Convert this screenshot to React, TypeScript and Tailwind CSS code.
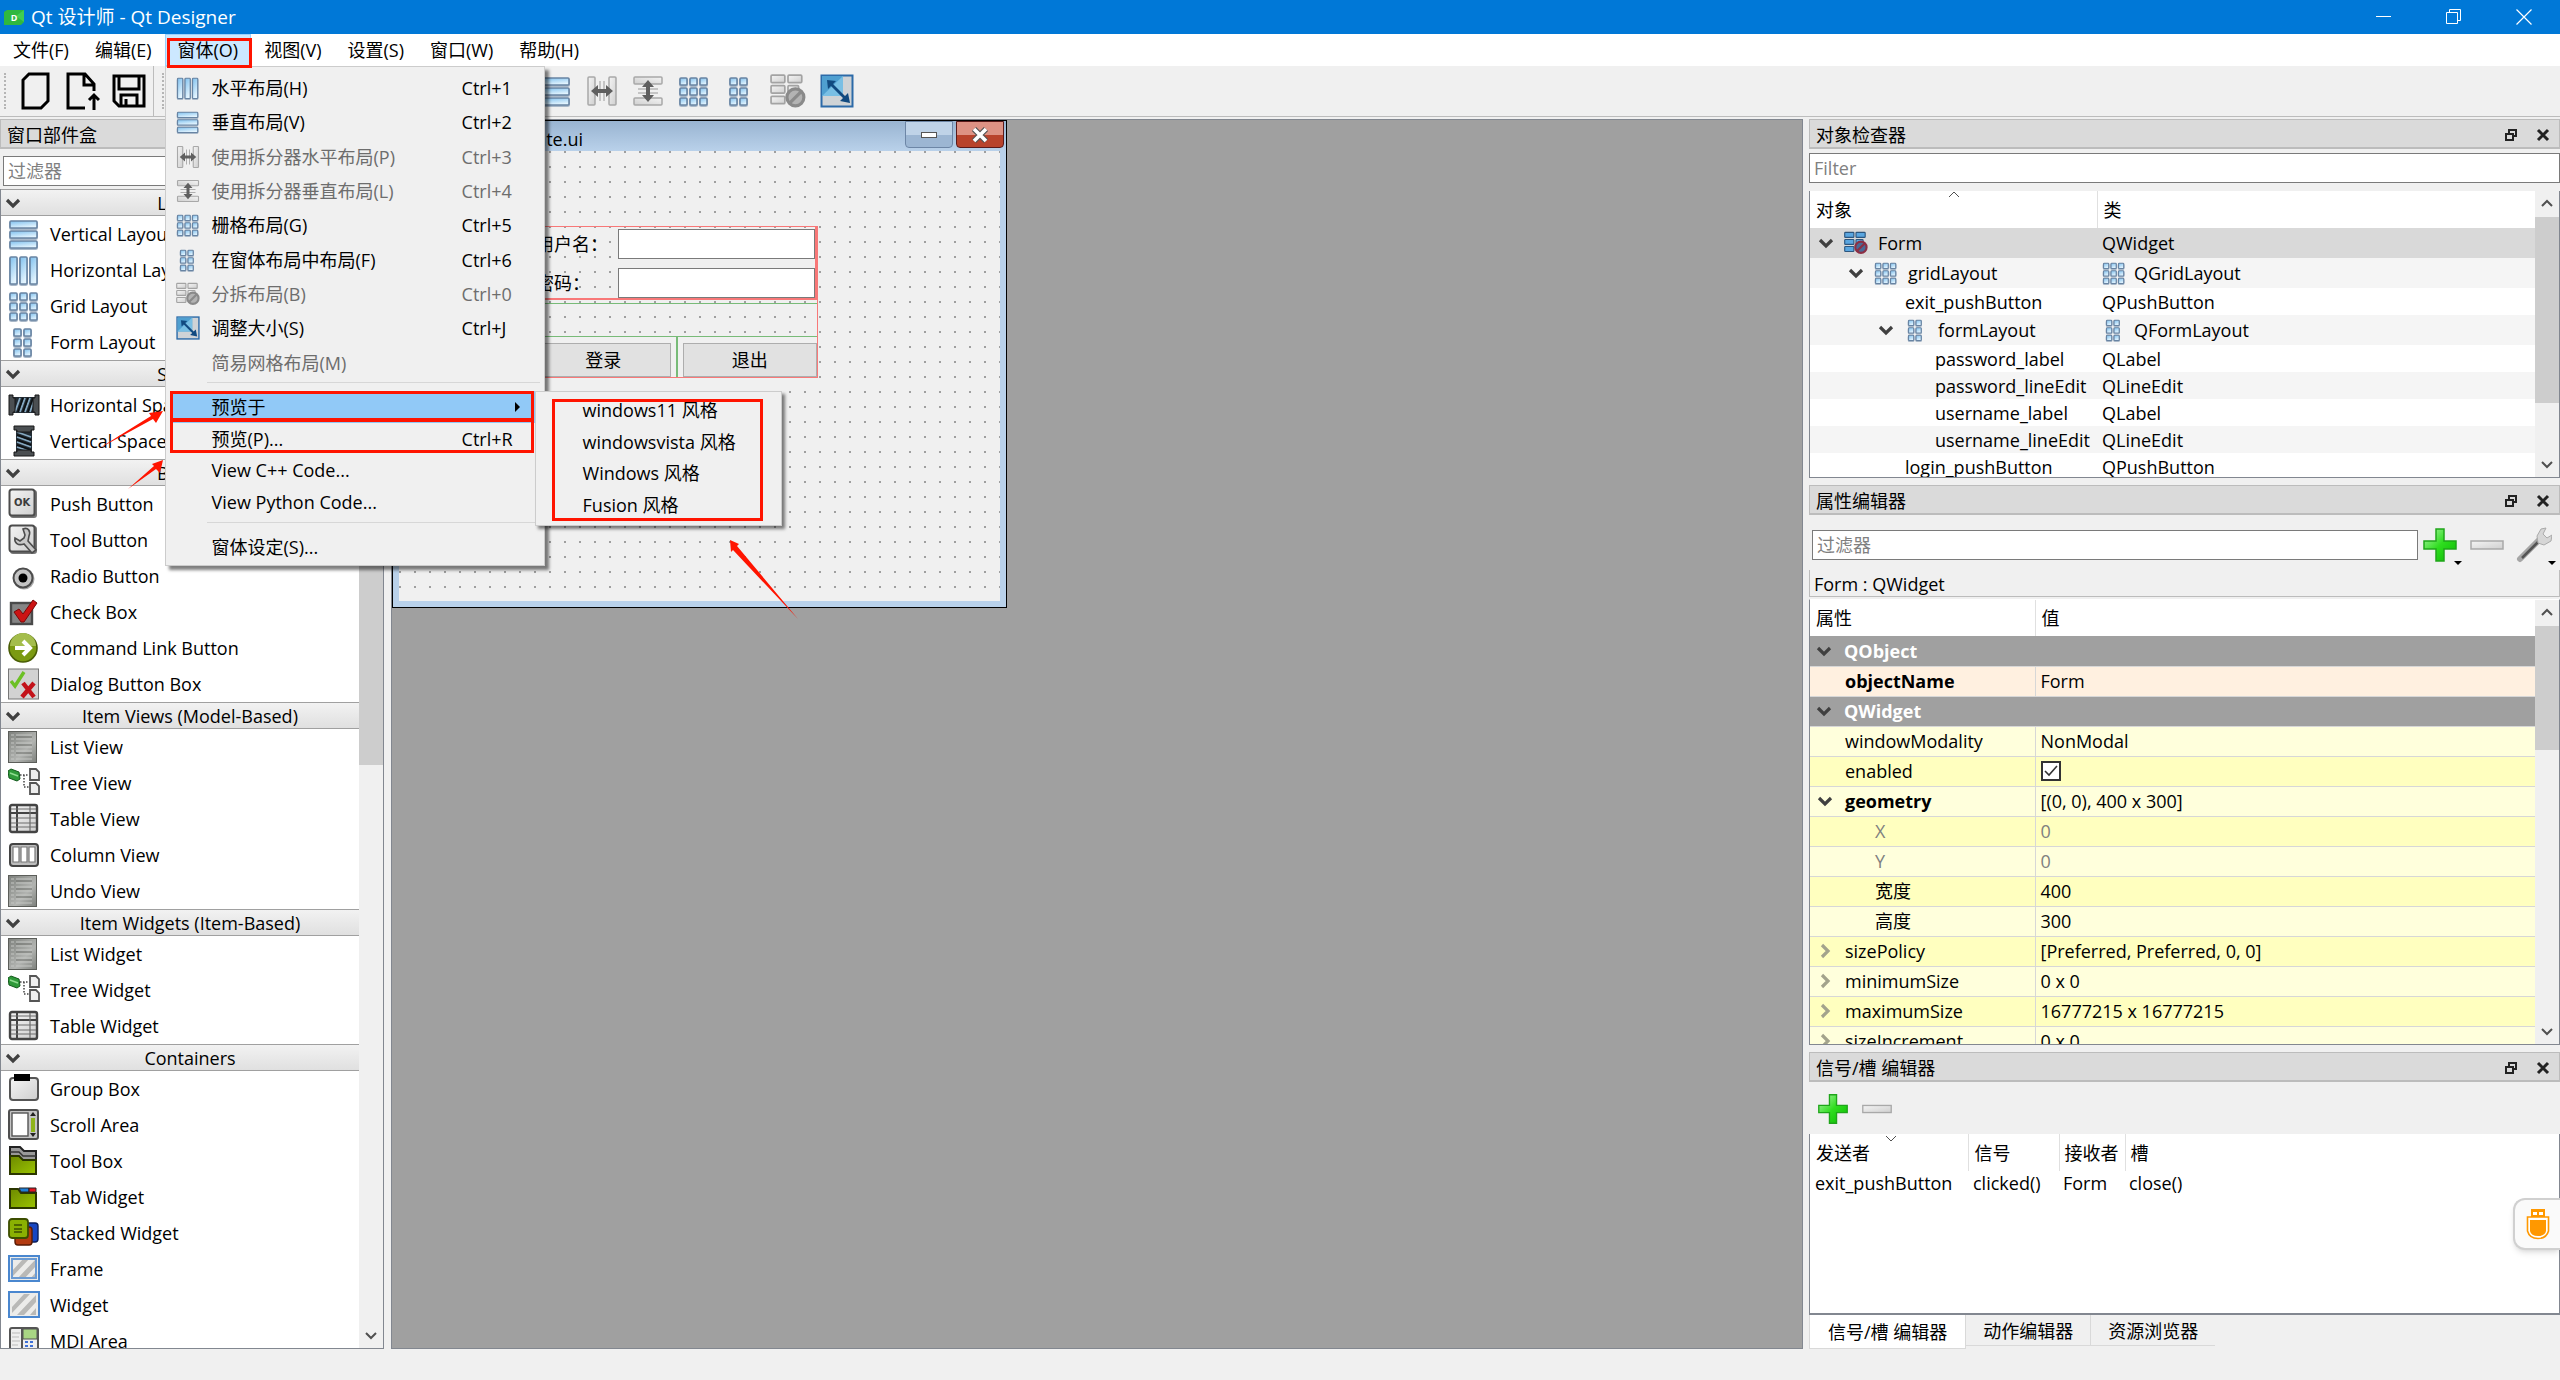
import { ReactNode } from "react";

interface IconProps {
    className?: string;
}

type LayoutKind = "vertical" | "horizontal" | "grid" | "form";

// x, y, width, height on a 32 x 32 grid
const layoutCells: Record<LayoutKind, number[][]> = {
    vertical: [[2, 3, 27, 7], [2, 13, 27, 7], [2, 23, 27, 7]],
    horizontal: [[2, 3, 7, 27], [12, 3, 7, 27], [22, 3, 7, 27]],
    grid: [2, 12, 22].flatMap(y => [2, 12, 22].map(x => [x, y + 1, 7, 7])),
    form: [2, 12, 22].flatMap(y => [6, 16].map(x => [x, y + 1, 7, 7])),
};

function Gradients() {
    return (
        <svg width="0" height="0" className="absolute" aria-hidden="true">
            <defs>
                <linearGradient id="blueCell" x1="0" y1="0" x2="0.4" y2="1">
                    <stop offset="0" stopColor="#7fc0ee" />
                    <stop offset="1" stopColor="#e3f4fe" />
                </linearGradient>
                <linearGradient id="greyCell" x1="0" y1="0" x2="1" y2="1">
                    <stop offset="0" stopColor="#f4f4f4" />
                    <stop offset="1" stopColor="#cfcfcf" />
                </linearGradient>
                <linearGradient id="darkGrey" x1="0" y1="0" x2="1" y2="1">
                    <stop offset="0" stopColor="#7d807c" />
                    <stop offset="0.6" stopColor="#b2b4b1" />
                    <stop offset="1" stopColor="#7d807c" />
                </linearGradient>
                <linearGradient id="green" x1="0" y1="0" x2="1" y2="1">
                    <stop offset="0" stopColor="#b5f5b0" />
                    <stop offset="0.5" stopColor="#2fdd1f" />
                    <stop offset="1" stopColor="#08b800" />
                </linearGradient>
                <linearGradient id="olive" x1="0" y1="0" x2="1" y2="1">
                    <stop offset="0" stopColor="#6d8a00" />
                    <stop offset="1" stopColor="#9bc400" />
                </linearGradient>
            </defs>
        </svg>
    );
}

function LayoutIcon({ kind, className = "size-8" }: IconProps & { kind: LayoutKind }) {
    return (
        <svg viewBox="0 0 32 32" className={className} aria-hidden="true">
            {layoutCells[kind].map(([x, y, w, h]) => (
                <g key={`${x}-${y}`}>
                    <rect x={x} y={y + 1} width={w} height={h} rx="1.5" fill="none" stroke="#a9b8c8" strokeWidth="2" />
                    <rect x={x} y={y} width={w} height={h} rx="1" fill="url(#blueCell)" stroke="#6884a3" strokeWidth="1.6" />
                </g>
            ))}
        </svg>
    );
}

function SplitIcon({ vertical = false, className = "size-8" }: IconProps & { vertical?: boolean }) {
    return (
        <svg viewBox="0 0 32 32" className={className} aria-hidden="true">
            <g transform={vertical ? "rotate(90 16 16)" : undefined}>
                <rect x="2" y="2" width="7" height="28" rx="1" fill="url(#greyCell)" stroke="#a8a8a8" strokeWidth="1.5" />
                <rect x="23" y="2" width="7" height="28" rx="1" fill="url(#greyCell)" stroke="#a8a8a8" strokeWidth="1.5" />
                <path d="M14 6v20M18 6v20" stroke="#9a9a9a" strokeWidth="1" />
                <path d="M5 16l7-6v4h8v-4l7 6-7 6v-4h-8v4z" fill="#5f5f5f" />
            </g>
        </svg>
    );
}

function BreakIcon({ blue = false, className = "size-8" }: IconProps & { blue?: boolean }) {
    const cells = [[1, 2, 13, 7], [17, 2, 13, 7], [1, 12, 13, 7], [17, 12, 10, 7], [1, 22, 13, 7]];
    return (
        <svg viewBox="0 0 34 34" className={className} aria-hidden="true">
            {cells.map(([x, y, w, h]) => (
                <rect key={`${x}-${y}`} x={x} y={y} width={w} height={h} rx="1"
                    fill={blue ? "#5aa6e0" : "url(#greyCell)"} stroke={blue ? "#2d567e" : "#a3a3a3"} strokeWidth="1.6" />
            ))}
            <circle cx="24" cy="23" r="8" fill={blue ? "#4a6a96" : "#b3b3b3"} stroke={blue ? "#8c2f45" : "#8a8a8a"} strokeWidth="3" />
            <path d="M18.500 28.500l11-11" stroke={blue ? "#8c2f45" : "#8a8a8a"} strokeWidth="3" />
        </svg>
    );
}

function AdjustIcon({ className = "size-8" }: IconProps) {
    return (
        <svg viewBox="0 0 34 34" className={className} aria-hidden="true">
            <rect x="1.5" y="1.5" width="31" height="31" fill="#cfd3d6" stroke="#2c6aa8" strokeWidth="2" />
            <path d="M2 2h21v20H2z" fill="#4f9fd0" />
            <path d="M2 22L23 2v20z" fill="#79bfe4" />
            <path d="M7 6l9 1-3 3 12 12 3-3 2 10-10-2 3-3L11 12l-3 3z" fill="#114a80" />
        </svg>
    );
}

function SpacerIcon({ vertical = false }: { vertical?: boolean }) {
    return (
        <svg viewBox="0 0 32 32" className="size-8" aria-hidden="true">
            <g transform={vertical ? "rotate(90 16 16)" : undefined}>
                <path d="M4 8h24v16H4z" fill="#222b33" />
                <path d="M7 23l5-14M12 23l5-14M17 23l5-14M22 23l4-12" stroke="#86a9c2" strokeWidth="1.8" />
                <path d="M10 23l5-14M15 23l5-14M20 23l5-14" stroke="#0c1013" strokeWidth="1.5" />
                <path d="M1 6h4v3h2v14H5v3H1zM31 6h-4v3h-2v14h2v3h4z" fill="#4b4f52" stroke="#191919" />
            </g>
        </svg>
    );
}

function ButtonFrame({ children }: { children: ReactNode }) {
    return (
        <svg viewBox="0 0 32 32" className="size-8" aria-hidden="true">
            <rect x="2" y="2" width="27" height="28" rx="3" fill="#777" />
            <rect x="1.5" y="1.5" width="25" height="26" rx="2.5" fill="url(#greyCell)" stroke="#4c4c4c" strokeWidth="2" />
            {children}
        </svg>
    );
}

function ListIcon() {
    return (
        <svg viewBox="0 0 32 32" className="size-8" aria-hidden="true">
            <rect x="0.5" y="0.5" width="28" height="31" fill="url(#darkGrey)" stroke="#5c5e5a" />
            <path d="M3 4h3M3 8h3M3 12h3M3 16h3M3 20h3M3 24h3M3 28h3M8 4h16M8 8h16M8 12h16M8 16h16M8 20h16M8 24h16M8 28h16" stroke="#c4c6c3" strokeWidth="1" />
            <path d="M8 6h16M8 14h16M8 22h16" stroke="#70726f" />
        </svg>
    );
}

function TreeIcon() {
    return (
        <svg viewBox="0 0 32 32" className="size-8" aria-hidden="true">
            <path d="M12 8h9M16 8v12h6" fill="none" stroke="#444" strokeWidth="1.5" strokeDasharray="1.5 1.5" />
            <path d="M0 4l3-2 8 3 1 7-3 2-8-3z" fill="#2f9a3a" stroke="#135a1c" />
            <path d="M2 6l8 3" stroke="#8fdc90" strokeWidth="1.5" />
            <path d="M22 2h6l3 3v8h-9zM22 16h6l3 3v8h-9z" fill="#eee" stroke="#555" strokeWidth="1.8" />
        </svg>
    );
}

function TableIcon() {
    return (
        <svg viewBox="0 0 32 32" className="size-8" aria-hidden="true">
            <rect x="2" y="2" width="27" height="27" rx="2" fill="url(#greyCell)" stroke="#444" strokeWidth="2.4" />
            <path d="M3 10h25M9 3v25" stroke="#444" strokeWidth="2" />
            <path d="M3 15h25M3 20h25M3 24h25M22 3v25M3 6h25" stroke="#6c6c6c" strokeWidth="1.2" />
        </svg>
    );
}

function ColumnIcon() {
    return (
        <svg viewBox="0 0 32 32" className="size-8" aria-hidden="true">
            <rect x="2" y="5" width="28" height="22" rx="3" fill="#bdbdbd" stroke="#444" strokeWidth="2" />
            <path d="M5 8h6v15H5zM13 8h6v15h-6zM21 8h6v15h-6z" fill="#fff" stroke="#777" strokeWidth="1.2" />
        </svg>
    );
}

function HatchIcon({ framed = false }: { framed?: boolean }) {
    return (
        <svg viewBox="0 0 32 32" className="size-8" aria-hidden="true">
            <rect x="1" y="3" width="30" height="25" fill="#ececea" stroke="#4a87cf" strokeWidth="2" />
            <path d="M4 18L16 5h6L4 24zM9 26L28 6v7L16 26zM22 26l6-7v7z" fill="#b9b9b7" />
            {framed && <rect x="4" y="6" width="24" height="19" fill="none" stroke="#6b9bd3" strokeWidth="2" />}
        </svg>
    );
}

const widgetIcons: Record<string, ReactNode> = {
    vbox: <LayoutIcon kind="vertical" />,
    hbox: <LayoutIcon kind="horizontal" />,
    grid: <LayoutIcon kind="grid" />,
    form: <LayoutIcon kind="form" />,
    hspacer: <SpacerIcon />,
    vspacer: <SpacerIcon vertical />,
    push: (
        <ButtonFrame>
            <text x="14" y="18" textAnchor="middle" fontSize="10" fontWeight="bold" fill="#3c3c3c" fontFamily="DejaVu Sans">OK</text>
        </ButtonFrame>
    ),
    tool: (
        <ButtonFrame>
            <path d="M15 5c5-2 8 2 6 7l-1 5 8 9-4 3-8-9c-6 2-10-1-9-6l5 3 4-3 1-3z" fill="#c9c9c9" stroke="#4d4d4d" strokeWidth="1.6" />
        </ButtonFrame>
    ),
    radio: (
        <svg viewBox="0 0 32 32" className="size-8" aria-hidden="true">
            <circle cx="16" cy="19" r="10.5" fill="#aaa" />
            <circle cx="15" cy="18" r="9.5" fill="#c4c4c4" stroke="#4c4c4c" strokeWidth="2" />
            <circle cx="15" cy="18" r="4.5" fill="#000" />
        </svg>
    ),
    check: (
        <svg viewBox="0 0 32 32" className="size-8" aria-hidden="true">
            <rect x="3" y="7" width="21" height="21" fill="#858585" stroke="#4a4a4a" strokeWidth="2.4" />
            <path d="M6 16l5-3 4 5L25 4l4 3-13 19h-3z" fill="#cc1414" stroke="#7c0808" />
        </svg>
    ),
    command: (
        <svg viewBox="0 0 32 32" className="size-8" aria-hidden="true">
            <circle cx="15" cy="16" r="14" fill="#7b9a12" stroke="#4a5e06" strokeWidth="1.6" />
            <path d="M2 14a13 13 0 0 1 26 0z" fill="#a4bd4c" />
            <path d="M7 16h14M15 9l7 7-7 7" fill="none" stroke="#fff" strokeWidth="4" />
        </svg>
    ),
    dialog: (
        <svg viewBox="0 0 32 32" className="size-8" aria-hidden="true">
            <rect x="0.5" y="1" width="30" height="30" fill="#d2d2d2" stroke="#777" />
            <path d="M3 13l4 5L16 4" fill="none" stroke="#6cc024" strokeWidth="3.4" />
            <path d="M15 15l11 14M26 15L14 29" stroke="#c3121a" strokeWidth="4.4" />
        </svg>
    ),
    list: <ListIcon />,
    tree: <TreeIcon />,
    table: <TableIcon />,
    column: <ColumnIcon />,
    group: (
        <svg viewBox="0 0 32 32" className="size-8" aria-hidden="true">
            <rect x="2" y="5" width="28" height="22" rx="3" fill="url(#greyCell)" stroke="#555" strokeWidth="2" />
            <rect x="6" y="1" width="16" height="7" fill="#000" />
        </svg>
    ),
    scroll: (
        <svg viewBox="0 0 32 32" className="size-8" aria-hidden="true">
            <rect x="1" y="1" width="29" height="29" rx="2" fill="#c4c4c4" stroke="#4f4f4f" strokeWidth="2" />
            <rect x="4" y="4" width="16" height="23" fill="#fff" stroke="#555" strokeWidth="1.4" />
            <rect x="23" y="9" width="4" height="14" fill="#8fb41a" />
            <path d="M22 7l3-4 3 4zM22 24l3 4 3-4z" fill="#222" />
        </svg>
    ),
    toolbox: (
        <svg viewBox="0 0 32 32" className="size-8" aria-hidden="true">
            <path d="M2 29V2h10l4 4h12v23z" fill="#999" stroke="#222" strokeWidth="2" />
            <path d="M2 7h9l4 4h13" fill="none" stroke="#333" strokeWidth="1.4" />
            <path d="M2 11h9l4 4h13v14H2z" fill="url(#olive)" stroke="#2b3600" strokeWidth="2" />
        </svg>
    ),
    tab: (
        <svg viewBox="0 0 32 32" className="size-8" aria-hidden="true">
            <path d="M2 8h8l3 4h15v15H2z" fill="url(#olive)" stroke="#2b3600" strokeWidth="2" />
            <path d="M11 7h10v4H13z" fill="#1f7fd6" stroke="#222" />
            <path d="M21 7h7v4h-7z" fill="#e3151f" stroke="#222" />
        </svg>
    ),
    stacked: (
        <svg viewBox="0 0 32 32" className="size-8" aria-hidden="true">
            <rect x="13" y="6" width="17" height="19" rx="3" fill="#1746c2" stroke="#0a1f5c" strokeWidth="1.4" />
            <rect x="7" y="10" width="17" height="18" rx="3" fill="#b33a10" stroke="#5a1b04" strokeWidth="1.4" />
            <rect x="1" y="2" width="19" height="19" rx="3" fill="#8ab002" stroke="#3c4d00" strokeWidth="1.8" />
            <path d="M6 8h8M6 12h8M6 15h8" stroke="#3c4d00" strokeWidth="1.4" />
        </svg>
    ),
    frame: <HatchIcon framed />,
    widget: <HatchIcon />,
    mdi: (
        <svg viewBox="0 0 32 32" className="size-8" aria-hidden="true">
            <rect x="2" y="3" width="28" height="28" rx="2" fill="#eee" stroke="#555" strokeWidth="2" />
            <path d="M15 4h14v10H15z" fill="#a9d684" stroke="#555" />
            <path d="M4 8h8M4 12h7M4 16h8M4 20h6" stroke="#bbb" />
            <path d="M17 17h3M22 17h3M17 21h3M22 21h3" stroke="#3d70d8" strokeWidth="2" />
            <path d="M14 4v26" stroke="#555" strokeWidth="2" />
        </svg>
    ),
};

function Chevron({ dir = "down", className = "size-4 text-[#404040]" }: IconProps & { dir?: "down" | "right" }) {
    return (
        <svg viewBox="0 0 16 16" className={className} aria-hidden="true">
            <path d={dir === "down" ? "M2 5l6 6 6-6" : "M5 2l6 6-6 6"} fill="none" stroke="currentColor" strokeWidth="3.2" />
        </svg>
    );
}

function ThinChevron({ dir, bold = false }: { dir: "down" | "up"; bold?: boolean }) {
    return (
        <svg viewBox="0 0 16 16" className="size-4" aria-hidden="true">
            <path d={dir === "down" ? "M3 6l5 5 5-5" : "M3 10l5-5 5 5"} fill="none" stroke="#505050" strokeWidth={bold ? 2 : 1} />
        </svg>
    );
}

function PlusIcon({ className = "size-9" }: IconProps) {
    return (
        <svg viewBox="0 0 36 36" className={className} aria-hidden="true">
            <path d="M14 2h8v12h12v8H22v12h-8V22H2v-8h12z" fill="url(#green)" stroke="#1fa51a" strokeWidth="1.5" />
        </svg>
    );
}

function MinusIcon({ className = "size-9" }: IconProps) {
    return (
        <svg viewBox="0 0 36 36" className={className} aria-hidden="true">
            <rect x="2" y="14" width="32" height="8" fill="url(#greyCell)" stroke="#a9a9a9" strokeWidth="1.5" />
        </svg>
    );
}

const widgetGroups = [
    { title: "Layouts", items: [["vbox", "Vertical Layout"], ["hbox", "Horizontal Layout"], ["grid", "Grid Layout"], ["form", "Form Layout"]] },
    { title: "Spacers", items: [["hspacer", "Horizontal Spacer"], ["vspacer", "Vertical Spacer"]] },
    {
        title: "Buttons",
        items: [["push", "Push Button"], ["tool", "Tool Button"], ["radio", "Radio Button"], ["check", "Check Box"], ["command", "Command Link Button"], ["dialog", "Dialog Button Box"]],
    },
    { title: "Item Views (Model-Based)", items: [["list", "List View"], ["tree", "Tree View"], ["table", "Table View"], ["column", "Column View"], ["list", "Undo View"]] },
    { title: "Item Widgets (Item-Based)", items: [["list", "List Widget"], ["tree", "Tree Widget"], ["table", "Table Widget"]] },
    {
        title: "Containers",
        items: [["group", "Group Box"], ["scroll", "Scroll Area"], ["toolbox", "Tool Box"], ["tab", "Tab Widget"], ["stacked", "Stacked Widget"], ["frame", "Frame"], ["widget", "Widget"], ["mdi", "MDI Area"]],
    },
];

const layoutActions = [
    { label: "水平布局(H)", keys: "Ctrl+1", icon: <LayoutIcon kind="horizontal" className="size-6" /> },
    { label: "垂直布局(V)", keys: "Ctrl+2", icon: <LayoutIcon kind="vertical" className="size-6" /> },
    { label: "使用拆分器水平布局(P)", keys: "Ctrl+3", icon: <SplitIcon className="size-6" />, disabled: true },
    { label: "使用拆分器垂直布局(L)", keys: "Ctrl+4", icon: <SplitIcon vertical className="size-6" />, disabled: true },
    { label: "栅格布局(G)", keys: "Ctrl+5", icon: <LayoutIcon kind="grid" className="size-6" /> },
    { label: "在窗体布局中布局(F)", keys: "Ctrl+6", icon: <LayoutIcon kind="form" className="size-6" /> },
    { label: "分拆布局(B)", keys: "Ctrl+0", icon: <BreakIcon className="size-6" />, disabled: true },
    { label: "调整大小(S)", keys: "Ctrl+J", icon: <AdjustIcon className="size-6" /> },
    { label: "简易网格布局(M)", keys: "", icon: null, disabled: true },
];

const objects = [
    { name: "Form", type: "QWidget", icon: "break", indent: "pl-1", open: true, row: "h-[30px] bg-[#d9d9d9]" },
    { name: "gridLayout", type: "QGridLayout", icon: "grid", indent: "pl-[34px]", open: true, row: "h-[30px] bg-[#f5f5f5]" },
    { name: "exit_pushButton", type: "QPushButton", icon: "", indent: "pl-[95px]", row: "h-[27px]" },
    { name: "formLayout", type: "QFormLayout", icon: "form", indent: "pl-16", open: true, row: "h-[30px] bg-[#f5f5f5]" },
    { name: "password_label", type: "QLabel", icon: "", indent: "pl-[125px]", row: "h-[27px]" },
    { name: "password_lineEdit", type: "QLineEdit", icon: "", indent: "pl-[125px]", row: "h-[27px] bg-[#f5f5f5]" },
    { name: "username_label", type: "QLabel", icon: "", indent: "pl-[125px]", row: "h-[27px]" },
    { name: "username_lineEdit", type: "QLineEdit", icon: "", indent: "pl-[125px]", row: "h-[27px] bg-[#f5f5f5]" },
    { name: "login_pushButton", type: "QPushButton", icon: "", indent: "pl-[95px]", row: "h-[27px]" },
];

const light = "bg-[#ffffdc]";
const deep = "bg-[#ffffbf]";

const properties = [
    { name: "windowModality", value: "NonModal", bg: light },
    { name: "enabled", value: "check", bg: deep },
    { name: "geometry", value: "[(0, 0), 400 x 300]", bg: light, bold: true, arrow: "down" },
    { name: "X", value: "0", bg: deep, child: true, muted: true },
    { name: "Y", value: "0", bg: light, child: true, muted: true },
    { name: "宽度", value: "400", bg: deep, child: true },
    { name: "高度", value: "300", bg: light, child: true },
    { name: "sizePolicy", value: "[Preferred, Preferred, 0, 0]", bg: deep, arrow: "right" },
    { name: "minimumSize", value: "0 x 0", bg: light, arrow: "right" },
    { name: "maximumSize", value: "16777215 x 16777215", bg: deep, arrow: "right" },
    { name: "sizeIncrement", value: "0 x 0", bg: light, arrow: "right" },
];

function DockTitle({ title, controls = true }: { title: string; controls?: boolean }) {
    return (
        <div className="flex h-[30px] shrink-0 items-center border border-b-2 border-[#bcbcbc] bg-[#dadada] pt-0.5 pl-1.5">
            <h2 className="flex-1">{title}</h2>
            {controls && (
                <div className="flex items-center gap-4 pr-2">
                    <button aria-label="浮动">
                        <svg viewBox="0 0 16 16" className="size-4">
                            <path d="M6 6V3h7v6h-3" fill="none" stroke="#222" strokeWidth="2" />
                            <path d="M3 7h7v6H3z" fill="none" stroke="#222" strokeWidth="2" />
                        </svg>
                    </button>
                    <button aria-label="关闭">
                        <svg viewBox="0 0 16 16" className="size-4">
                            <path d="M3 3l10 10M13 3L3 13" stroke="#222" strokeWidth="3" />
                        </svg>
                    </button>
                </div>
            )}
        </div>
    );
}

function ScrollBar({ thumb }: { thumb: string }) {
    return (
        <div className="flex w-6 shrink-0 flex-col items-center bg-[#f0f0f0]">
            <div className="flex h-[26px] shrink-0 items-center"><ThinChevron dir="up" bold /></div>
            <div className="flex w-full flex-1 flex-col">
                <div className={`w-full bg-[#cdcdcd] ${thumb}`} />
            </div>
            <div className="flex h-[26px] shrink-0 items-center"><ThinChevron dir="down" bold /></div>
        </div>
    );
}

function StyleMenu() {
    return (
        <div className="absolute top-0 left-[365px] z-10 w-[247px] border border-[#ccc] bg-[#f0f0f0] pt-0.5 pb-1 shadow-[3px_3px_3px_rgba(0,0,0,0.5)]">
            <ul className="grid h-[127px] grid-rows-4">
                {["windows11 风格", "windowsvista 风格", "Windows 风格", "Fusion 风格"].map(style => (
                    <li key={style} className="flex">
                        <button className="flex-1 pl-[47px] text-left">{style}</button>
                    </li>
                ))}
            </ul>
            <span className="absolute top-[7px] left-4 h-[122px] w-[211px] border-3 border-[#ff1400]" />
        </div>
    );
}

function FormMenu() {
    return (
        <div className="absolute top-full left-0 z-20 w-[380px] border border-[#ccc] bg-[#f0f0f0] px-1 pt-1 pb-0.5 shadow-[4px_4px_3px_rgba(0,0,0,0.5)]">
            <ul className="grid h-[309px] grid-rows-9">
                {layoutActions.map(action => (
                    <li key={action.label} className="flex">
                        <button disabled={action.disabled} className="flex flex-1 items-center text-left disabled:text-[#6d6d6d]">
                            <span className="flex w-[42px] pl-1.5">{action.icon}</span>
                            <span className="flex-1">{action.label}</span>
                            <span className="w-[78px]">{action.keys}</span>
                        </button>
                    </li>
                ))}
            </ul>
            <hr className="mt-0.5 mb-2 ml-[37px] border-[#d7d7d7]" />
            <ul className="grid h-[127px] grid-rows-4">
                <li className="relative flex">
                    <button className="flex flex-1 items-center bg-[#91c9f7] pr-5 pl-[42px] text-left">
                        <span className="flex-1">预览于</span>
                        <span className="size-0 border-y-[5px] border-l-[5px] border-y-transparent border-l-black" />
                    </button>
                    <StyleMenu />
                    <span className="absolute top-0 left-0 h-[30px] w-[364px] border-3 border-[#ff1400]" />
                </li>
                <li className="relative flex">
                    <button className="flex flex-1 items-center pl-[42px] text-left">
                        <span className="flex-1">预览(P)...</span>
                        <span className="w-[78px]">Ctrl+R</span>
                    </button>
                    <span className="absolute -top-1 left-0 h-[34px] w-[364px] border-3 border-[#ff1400]" />
                </li>
                <li className="flex"><button className="flex-1 pl-[42px] text-left">View C++ Code...</button></li>
                <li className="flex"><button className="flex-1 pl-[42px] text-left">View Python Code...</button></li>
            </ul>
            <hr className="mt-1 mb-2 ml-[37px] border-[#d7d7d7]" />
            <button className="block h-8 w-full pl-[42px] text-left">窗体设定(S)...</button>
        </div>
    );
}

function MenuBar() {
    return (
        <nav className="flex h-8 shrink-0 bg-white">
            <button className="px-[13px]">文件(F)</button>
            <button className="px-[13px]">编辑(E)</button>
            <div className="relative flex">
                <button className="bg-[#cce8ff] px-[13px] inset-ring inset-ring-[#99d1ff]">窗体(O)</button>
                <FormMenu />
                <span className="absolute top-1 left-0.5 z-30 h-[30px] w-[85px] border-3 border-[#ff1400]" />
            </div>
            <button className="px-[13px]">视图(V)</button>
            <button className="px-[13px]">设置(S)</button>
            <button className="px-[13px]">窗口(W)</button>
            <button className="px-[13px]">帮助(H)</button>
        </nav>
    );
}

function Handle() {
    return <span className="h-9 border-l-2 border-dotted border-[#b5b5b5]" />;
}

function ToolBar() {
    return (
        <div className="flex h-[51px] shrink-0 items-center border-b border-[#bcbcbc]">
            <div className="flex h-full items-center gap-[11px] border-r border-[#bcbcbc] pr-1.5 pl-1">
                <Handle />
                <button aria-label="新建">
                    <svg viewBox="0 0 36 40" className="h-10 w-9">
                        <path d="M12 3h19v27l-7 7H6V9z" fill="none" stroke="#000" strokeWidth="3" />
                    </svg>
                </button>
                <button aria-label="打开">
                    <svg viewBox="0 0 36 40" className="h-10 w-9">
                        <path d="M21 37H4V3h17l9 10v7M20 3v11h10" fill="none" stroke="#000" strokeWidth="3" />
                        <path d="M30 39V25M25 29l5-5 5 5" fill="none" stroke="#000" strokeWidth="3" />
                    </svg>
                </button>
                <button aria-label="保存">
                    <svg viewBox="0 0 36 40" className="h-10 w-9">
                        <path d="M3 5h30v30H8l-5-5z" fill="none" stroke="#000" strokeWidth="3" />
                        <path d="M8 5v13h20V5M10 35V24h16v11M15 28v6" fill="none" stroke="#000" strokeWidth="3" />
                    </svg>
                </button>
            </div>
            <div className="flex flex-1 items-center pl-2">
                <Handle />
                <div className="flex items-center gap-[14px] pl-[376px]">
                    <button aria-label="垂直布局"><LayoutIcon kind="vertical" /></button>
                    <button disabled aria-label="使用拆分器水平布局"><SplitIcon /></button>
                    <button disabled aria-label="使用拆分器垂直布局"><SplitIcon vertical /></button>
                    <button aria-label="栅格布局"><LayoutIcon kind="grid" /></button>
                    <button aria-label="在窗体布局中布局"><LayoutIcon kind="form" /></button>
                    <button disabled aria-label="分拆布局"><BreakIcon className="size-9" /></button>
                    <button aria-label="调整大小"><AdjustIcon className="size-[34px]" /></button>
                </div>
            </div>
        </div>
    );
}

function WidgetBox() {
    return (
        <aside className="flex w-[384px] shrink-0 flex-col pt-0.5">
            <DockTitle title="窗口部件盒" />
            <input aria-label="过滤器" placeholder="过滤器" className="mx-[3px] mt-[7px] h-[30px] shrink-0 border border-[#7a7a7a] bg-white px-1 placeholder:text-[#808080]" />
            <div className="mt-[3px] flex min-h-0 flex-1 border border-t-0 border-[#828790] bg-white">
                <div className="min-w-0 flex-1 overflow-hidden">
                    {widgetGroups.map(group => (
                        <section key={group.title}>
                            <h3 className="flex h-[27px] items-center border-y border-[#a0a0a0] bg-linear-to-b from-[#f2f2f2] to-[#e0e0e0] pl-1">
                                <Chevron />
                                <span className="flex-1 text-center">{group.title}</span>
                            </h3>
                            <ul>
                                {group.items.map(([icon, name]) => (
                                    <li key={name} className="flex h-9 items-center gap-2.5 pl-[7px]">
                                        {widgetIcons[icon]}
                                        <span>{name}</span>
                                    </li>
                                ))}
                            </ul>
                        </section>
                    ))}
                </div>
                <ScrollBar thumb="h-[550px]" />
            </div>
        </aside>
    );
}

function FormWindow() {
    return (
        <div className="w-[615px] border border-black bg-[#b9d1ea]">
            <div className="flex h-[30px] items-start justify-between bg-linear-to-b from-[#99b4d1] to-[#b9d1ea]">
                <span className="w-[190px] pt-1.5 text-right">template.ui</span>
                <div className="flex gap-[3px] pr-0.5">
                    <button aria-label="最小化" className="flex h-[27px] w-12 items-center justify-center rounded-b-sm border border-[#6d86a6] bg-linear-to-b from-[#bfd3e8] from-50% to-[#9cb6d3] to-50%">
                        <span className="h-1.5 w-4 border border-[#555] bg-white" />
                    </button>
                    <button aria-label="关闭窗体" className="flex h-[27px] w-12 items-center justify-center rounded-b-sm border border-[#5a1a1a] bg-linear-to-b from-[#dd9284] from-50% to-[#b8432c] to-50%">
                        <svg viewBox="0 0 20 20" className="size-5">
                            <path d="M4 4l12 12M16 4L4 16" stroke="#555" strokeWidth="6" />
                            <path d="M4 4l12 12M16 4L4 16" stroke="#fff" strokeWidth="3.6" />
                        </svg>
                    </button>
                </div>
            </div>
            <div className="mx-1.5 mb-[6px] h-[450px] bg-[#f0f0f0] bg-[conic-gradient(at_2px_2px,transparent_75%,#9f9f9f_0)] bg-size-[15px_15px] pt-[75px] pl-[136px]">
                <div className="flex h-[152px] w-[283px] flex-col border border-[#f87878]">
                    <div className="flex flex-col gap-[9px] border-r-2 border-b-2 border-[#f87878] pt-0.5">
                        <div className="flex h-[30px] items-center">
                            <label htmlFor="username" className="w-[82px]">用户名：</label>
                            <input id="username" className="h-full min-w-0 flex-1 border border-[#7a7a7a] bg-white px-1" />
                        </div>
                        <div className="flex h-[30px] items-center">
                            <label htmlFor="password" className="w-[82px]">密码：</label>
                            <input id="password" className="h-full min-w-0 flex-1 border border-[#7a7a7a] bg-white px-1" />
                        </div>
                    </div>
                    <div className="mt-[3px] h-[34px] border-y border-[#78bb78]" />
                    <div className="flex flex-1 gap-[5px]">
                        <button className="mt-1.5 flex-1 border border-[#adadad] bg-[#e1e1e1]">登录</button>
                        <span className="w-0.5 bg-[#78bb78]" />
                        <button className="mt-1.5 flex-1 border border-[#adadad] bg-[#e1e1e1]">退出</button>
                    </div>
                </div>
            </div>
        </div>
    );
}

function ObjectInspector() {
    return (
        <section className="flex flex-col">
            <DockTitle title="对象检查器" />
            <input aria-label="Filter" placeholder="Filter" className="mt-1 h-[30px] border border-[#7a7a7a] bg-white px-1 placeholder:text-[#808080]" />
            <div className="mt-2 flex h-[287px] overflow-hidden border border-t-0 border-[#828790] bg-white">
                <div className="min-w-0 flex-1 overflow-hidden">
                    <table className="w-full table-fixed border-collapse">
                        <thead>
                            <tr className="h-[37px]">
                                <th className="relative w-[287px] border-r border-[#e0e0e0] p-0 pl-1.5 text-left font-normal">
                                    <span className="absolute -top-1 left-[136px]"><ThinChevron dir="up" /></span>
                                    对象
                                </th>
                                <th className="p-0 pl-1.5 text-left font-normal">类</th>
                            </tr>
                        </thead>
                        <tbody>
                            {objects.map(object => (
                                <tr key={object.name} className={object.row}>
                                    <td className={`p-0 ${object.indent}`}>
                                        <span className="flex items-center whitespace-nowrap">
                                            {object.open && <span className="mr-2.5 ml-1 flex"><Chevron /></span>}
                                            {object.icon === "break" && <BreakIcon blue className="mr-2.5 size-6" />}
                                            {object.icon === "grid" && <LayoutIcon kind="grid" className="mr-2.5 size-6" />}
                                            {object.icon === "form" && <LayoutIcon kind="form" className="mr-2.5 size-6" />}
                                            {object.name}
                                        </span>
                                    </td>
                                    <td className="p-0 pl-[5px]">
                                        <span className="flex items-center gap-2">
                                            {object.icon === "grid" && <LayoutIcon kind="grid" className="size-6" />}
                                            {object.icon === "form" && <LayoutIcon kind="form" className="size-6" />}
                                            {object.type}
                                        </span>
                                    </td>
                                </tr>
                            ))}
                        </tbody>
                    </table>
                </div>
                <ScrollBar thumb="h-[186px]" />
            </div>
        </section>
    );
}

function GroupRow({ name }: { name: string }) {
    return (
        <tr className="h-[30px] border-b border-[#d7d7d7] bg-[#a0a0a0]">
            <th colSpan={2} className="p-0 pl-1.5 text-left font-bold text-white">
                <span className="flex items-center gap-3">
                    <Chevron />
                    {name}
                </span>
            </th>
        </tr>
    );
}

function PropertyEditor() {
    return (
        <section className="mt-[7px] flex min-h-0 flex-1 flex-col">
            <DockTitle title="属性编辑器" />
            <div className="flex h-[55px] shrink-0 items-center gap-[11px] pt-1 pr-2 pl-[3px]">
                <div className="flex flex-1 items-center gap-1">
                    <input aria-label="属性过滤器" placeholder="过滤器" className="h-[30px] min-w-0 flex-1 border border-[#7a7a7a] bg-white px-1 placeholder:text-[#808080]" />
                    <button aria-label="添加" className="relative">
                        <PlusIcon />
                        <span className="absolute -right-1 -bottom-0.5 border-x-4 border-t-4 border-x-transparent border-t-black" />
                    </button>
                </div>
                <button aria-label="删除"><MinusIcon /></button>
                <button aria-label="配置" className="relative">
                    <svg viewBox="0 0 36 36" className="size-9">
                        <path d="M4 32L24 12" stroke="#a6a6a6" strokeWidth="6" strokeLinecap="round" />
                        <path d="M6 31L24 13" stroke="#555" strokeWidth="2.5" />
                        <path d="M21 9l4-7 5-1-3 6 4 4 5-3-1 6-7 4-6-2z" fill="#d6d6d6" stroke="#aaa" />
                    </svg>
                    <span className="absolute -right-1 -bottom-0.5 border-x-4 border-t-4 border-x-transparent border-t-black" />
                </button>
            </div>
            <p className="h-[27px] shrink-0 border-x border-b border-[#bcbcbc] px-1 pt-0.5">Form : QWidget</p>
            <div className="mt-[2px] flex min-h-0 flex-1 overflow-hidden border border-[#828790] border-t-white bg-white">
                <div className="min-w-0 flex-1 overflow-hidden">
                    <table className="w-full table-fixed border-collapse">
                        <thead>
                            <tr className="h-9">
                                <th className="w-[225px] border-r border-[#e0e0e0] p-0 pl-1.5 text-left font-normal">属性</th>
                                <th className="p-0 pl-1.5 text-left font-normal">值</th>
                            </tr>
                        </thead>
                        <tbody>
                            <GroupRow name="QObject" />
                            <tr className="h-[30px] border-b border-[#d7d7d7] bg-[#fff0e0]">
                                <td className="border-r border-[#d7d7d7] p-0 pl-[35px] font-bold">objectName</td>
                                <td className="p-0 pl-[5px]">Form</td>
                            </tr>
                            <GroupRow name="QWidget" />
                            {properties.map(property => (
                                <tr key={property.name} className={`h-[30px] border-b border-[#d7d7d7] ${property.bg} ${property.muted ? "text-[#808080]" : ""}`}>
                                    <td className={`border-r border-[#d7d7d7] p-0 ${property.child ? "pl-[65px]" : property.arrow ? "pl-[7px]" : "pl-[35px]"} ${property.bold ? "font-bold" : ""}`}>
                                        <span className="flex items-center gap-3">
                                            {property.arrow === "down" && <Chevron />}
                                            {property.arrow === "right" && <Chevron dir="right" className="size-4 text-[#a3a38c]" />}
                                            {property.name}
                                        </span>
                                    </td>
                                    <td className="p-0 pl-[5px]">
                                        {property.value === "check" ? (
                                            <label className="relative flex size-5 items-center">
                                                <input type="checkbox" defaultChecked aria-label="enabled" className="size-5 appearance-none border-2 border-[#333] bg-white" />
                                                <svg viewBox="0 0 20 20" className="absolute size-5">
                                                    <path d="M4 10l4 4 8-9" fill="none" stroke="#333" strokeWidth="1.6" />
                                                </svg>
                                            </label>
                                        ) : property.value}
                                    </td>
                                </tr>
                            ))}
                        </tbody>
                    </table>
                </div>
                <ScrollBar thumb="h-[124px]" />
            </div>
        </section>
    );
}

function SignalEditor() {
    return (
        <section className="mt-[7px] flex shrink-0 flex-col">
            <DockTitle title="信号/槽 编辑器" />
            <div className="flex h-[52px] items-center gap-3 pt-0.5 pl-2">
                <button aria-label="添加信号"><PlusIcon className="size-8" /></button>
                <button aria-label="删除信号"><MinusIcon className="size-8" /></button>
            </div>
            <div className="h-[181px] border border-t-0 border-b-2 border-[#828790] bg-white">
                <table className="border-collapse">
                    <thead>
                        <tr className="h-[37px] text-left">
                            <th className="relative w-[158px] border-r border-[#e0e0e0] p-0 pl-1.5 font-normal">
                                <span className="absolute -top-1 left-[73px]"><ThinChevron dir="down" /></span>
                                发送者
                            </th>
                            <th className="w-[91px] border-r border-[#e0e0e0] p-0 pl-1.5 font-normal">信号</th>
                            <th className="w-[66px] border-r border-[#e0e0e0] p-0 pl-[5px] font-normal">接收者</th>
                            <th className="w-20 p-0 pl-[5px] font-normal">槽</th>
                        </tr>
                    </thead>
                    <tbody>
                        <tr className="h-6 whitespace-nowrap">
                            <td className="p-0 pl-[5px]">exit_pushButton</td>
                            <td className="p-0 pl-[5px]">clicked()</td>
                            <td className="p-0 pl-1">Form</td>
                            <td className="p-0 pl-1">close()</td>
                        </tr>
                    </tbody>
                </table>
            </div>
            <div role="tablist" className="flex h-[34px] items-start">
                <button role="tab" aria-selected="true" className="h-full border border-t-0 border-[#d9d9d9] bg-white px-[18px]">信号/槽 编辑器</button>
                <button role="tab" aria-selected="false" className="h-[31px] border-r border-b border-[#d9d9d9] px-[17px] pt-0.5">动作编辑器</button>
                <button role="tab" aria-selected="false" className="h-[31px] border-b border-[#d9d9d9] px-[17px] pt-0.5">资源浏览器</button>
            </div>
        </section>
    );
}

export default function App() {
    return (
        <div className="relative flex h-screen flex-col overflow-hidden bg-[#f0f0f0] font-['Open_Sans','Noto_Sans_CJK_SC',sans-serif] text-[18px] leading-6 text-black">
            <Gradients />
            <header className="flex h-[34px] shrink-0 items-center bg-[#0078d7] pl-1 text-white">
                <svg viewBox="0 0 20 16" className="mr-[7px] h-4 w-5" aria-hidden="true">
                    <path d="M3 1h17v12l-3 3H0V3z" fill="#2fb83f" />
                    <path d="M20 1v12l-8-6z" fill="#41cd52" />
                    <text x="10" y="11.5" textAnchor="middle" fontSize="9" fontWeight="bold" fill="#fff">D</text>
                </svg>
                <h1 className="flex-1 text-[19px]">Qt 设计师 - Qt Designer</h1>
                <div className="flex gap-[54px] pr-7">
                    <button aria-label="最小化窗口">
                        <svg viewBox="0 0 16 16" className="size-4"><path d="M0 7.5h15" stroke="#fff" /></svg>
                    </button>
                    <button aria-label="还原窗口">
                        <svg viewBox="0 0 16 16" className="size-4">
                            <path d="M.5 3.5h11v11H.5zM3.5 3V.5h11v11H12" fill="none" stroke="#fff" />
                        </svg>
                    </button>
                    <button aria-label="关闭窗口">
                        <svg viewBox="0 0 16 16" className="size-4"><path d="M.5.5l15 15M15.5.5l-15 15" stroke="#fff" strokeWidth="1.2" /></svg>
                    </button>
                </div>
            </header>
            <MenuBar />
            <ToolBar />
            <div className="flex min-h-0 flex-1">
                <WidgetBox />
                <main className="mt-0.5 ml-[7px] min-w-0 flex-1 border border-[#828790] bg-[#a0a0a0]">
                    <FormWindow />
                </main>
                <div className="ml-1.5 flex w-[751px] shrink-0 flex-col pt-0.5">
                    <ObjectInspector />
                    <PropertyEditor />
                    <SignalEditor />
                </div>
            </div>
            <footer className="h-[31px] shrink-0" />

            <button aria-label="U盘" className="absolute right-0 bottom-[130px] flex h-[52px] w-[47px] items-center justify-center rounded-l-xl border-2 border-r-0 border-[#d0d0d0] bg-[#fafafa] shadow-md">
                <svg viewBox="0 0 24 32" className="h-8 w-6">
                    <path d="M5 1h14v8H5z" fill="#ff9800" />
                    <path d="M7 4h4v3H7zM13 4h4v3h-4z" fill="#fff" />
                    <path d="M1.5 9h21v14q-2 7.5-10.5 7.5T1.5 23z" fill="#fff" stroke="#ff9800" strokeWidth="1.6" />
                    <path d="M4 12h16v11q-1 5-8 5t-8-5z" fill="#ff9800" />
                </svg>
            </button>
            <svg className="pointer-events-none absolute top-0 left-0 z-40 h-[640px] w-[820px]" aria-hidden="true">
                <path d="M163 411l-14 2 2 3-53 33 55-30 3 4z" fill="#ff1400" />
                <path d="M163 460l-11 4 2 2-26 23 28-20 4 4z" fill="#ff1400" />
                <path d="M730 540l9 4-2 2 61 73-65-69-2 2z" fill="#ff1400" />
            </svg>
        </div>
    );
}
